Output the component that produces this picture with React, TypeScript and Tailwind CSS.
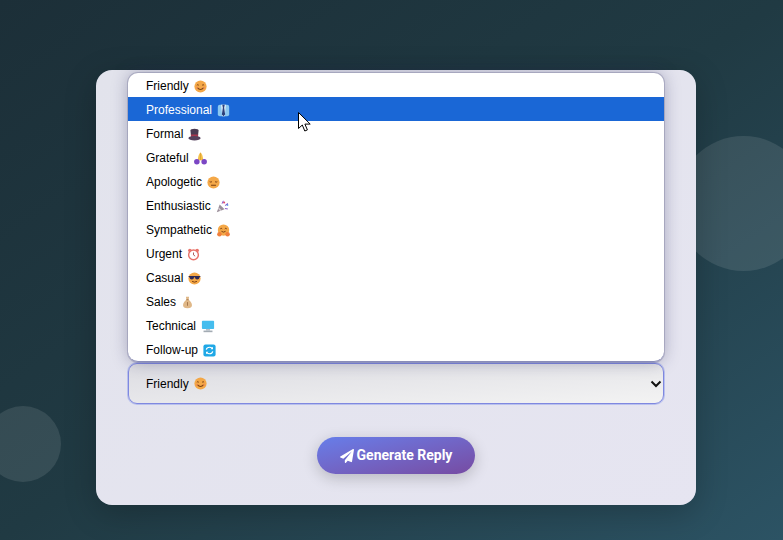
import { FaPaperPlane } from "react-icons/fa";

// emoji are drawn by hand, the sandbox has no colour emoji font
function Smile() {
  return (
    <svg width="13" height="13" viewBox="0 0 16 16">
      <circle cx="8" cy="8" r="7.500" fill="#f4a848" />
      <path d="M3.500 6.500q1.200-1.600 2.400 0M10 6.500q1.200-1.600 2.400 0" stroke="#7a3f12" strokeWidth="1.200" fill="none" />
      <path d="M4 9.500q4 4.500 8 0" stroke="#7a3f12" strokeWidth="1.300" fill="none" />
      <circle cx="3.600" cy="9.600" r="1.400" fill="#f08a5a" opacity=".7" />
      <circle cx="12.400" cy="9.600" r="1.400" fill="#f08a5a" opacity=".7" />
    </svg>
  );
}

function Suit() {
  return (
    <svg width="13" height="13" viewBox="0 0 16 16">
      <rect x="1" y="1" width="14" height="14" rx="2.500" fill="#8cc8f0" />
      <path d="M5 1h6L9.500 15h-3z" fill="#e4f2fb" />
      <path d="M6.500 1h3L8.800 4.500 10 13l-2 2-2-2 1.200-8.500z" fill="#2b3f7a" />
    </svg>
  );
}

function Hat() {
  return (
    <svg width="13" height="13" viewBox="0 0 16 16">
      <path d="M3 3q0-2 5-2t5 2l-.8 8H3.800z" fill="#4a3a52" />
      <path d="M3.500 8h9l-.3 3H3.800z" fill="#a5364f" />
      <ellipse cx="8" cy="12.500" rx="7.500" ry="2.800" fill="#54405c" />
    </svg>
  );
}

function Pray() {
  return (
    <svg width="13" height="13" viewBox="0 0 16 16">
      <path d="M8 .5Q5.500 2 4.500 10h7Q10.500 2 8 .5z" fill="#f5c04a" />
      <path d="M8 1v9" stroke="#d99a2c" strokeWidth=".8" />
      <circle cx="3.500" cy="12" r="3.400" fill="#7b46c4" />
      <circle cx="12.500" cy="12" r="3.400" fill="#7b46c4" />
    </svg>
  );
}

function Pensive() {
  return (
    <svg width="13" height="13" viewBox="0 0 16 16">
      <circle cx="8" cy="8" r="7.500" fill="#f4a848" />
      <path d="M3.300 7q1.400 1 2.800 0M9.900 7q1.400 1 2.800 0" stroke="#7a3f12" strokeWidth="1.200" fill="none" />
      <path d="M5 11.500h6" stroke="#7a3f12" strokeWidth="1.300" />
    </svg>
  );
}

function Party() {
  return (
    <svg width="13" height="13" viewBox="0 0 16 16">
      <path d="M1 15l3.500-9.500 6 6z" fill="#9b8f9a" />
      <path d="M3.200 9l3.800 3.800-1.800.7-2.600-2.600z" fill="#d9d2d8" />
      <circle cx="10" cy="3" r="1.300" fill="#e0476a" />
      <circle cx="14" cy="6" r="1.200" fill="#4a8be0" />
      <path d="M7.500 4.500l1.500-3.500M11 7l3.500-3M11 10.500l3.500.5" stroke="#7b46c4" strokeWidth="1.100" />
    </svg>
  );
}

function Hug() {
  return (
    <svg width="13" height="13" viewBox="0 0 16 16">
      <circle cx="8" cy="7.500" r="7" fill="#f4a848" />
      <path d="M4 6q1.200-1.500 2.400 0M9.600 6q1.200-1.500 2.400 0" stroke="#7a3f12" strokeWidth="1.200" fill="none" />
      <path d="M5.500 9q2.500 2 5 0" stroke="#7a3f12" strokeWidth="1.200" fill="none" />
      <circle cx="3" cy="12.500" r="2.800" fill="#f07f3c" />
      <circle cx="13" cy="12.500" r="2.800" fill="#f07f3c" />
    </svg>
  );
}

function Clock() {
  return (
    <svg width="13" height="13" viewBox="0 0 16 16">
      <circle cx="3.500" cy="3" r="2.200" fill="#e8736a" />
      <circle cx="12.500" cy="3" r="2.200" fill="#e8736a" />
      <circle cx="8" cy="8.500" r="6" fill="#fff" stroke="#e8736a" strokeWidth="1.800" />
      <path d="M8 5.500v3l2 1.500" stroke="#a34a4a" strokeWidth="1.100" fill="none" />
    </svg>
  );
}

function Sunglasses() {
  return (
    <svg width="13" height="13" viewBox="0 0 16 16">
      <circle cx="8" cy="8" r="7.500" fill="#f4a848" />
      <path d="M.8 5h14.400v1.200l-1 .3q-.4 2.800-2.900 2.800T8.500 6.500h-1Q7.200 9.300 4.700 9.300T1.800 6.500l-1-.3z" fill="#2f2a55" />
      <path d="M5 11.500q3 2 6 0" stroke="#7a3f12" strokeWidth="1.200" fill="none" />
    </svg>
  );
}

function MoneyBag() {
  return (
    <svg width="13" height="13" viewBox="0 0 16 16">
      <path d="M6 1h4L9.300 4.500q4.200 3 4.200 7 0 3.500-5.500 3.500t-5.500-3.500q0-4 4.200-7z" fill="#e0b888" />
      <path d="M6.500 4.500h3" stroke="#a5764a" strokeWidth="1" />
      <path d="M8 7.500v4.500" stroke="#a5764a" strokeWidth="1.200" />
    </svg>
  );
}

function Computer() {
  return (
    <svg width="14" height="13" viewBox="0 0 16 16">
      <rect x=".5" y="1" width="15" height="10" rx="1" fill="#45bdee" />
      <rect x="5.500" y="11" width="5" height="2" fill="#b9c0c8" />
      <rect x="2.500" y="13" width="11" height="2" fill="#a3abb3" />
    </svg>
  );
}

function Cycle() {
  return (
    <svg width="13" height="13" viewBox="0 0 16 16">
      <rect x=".5" y=".5" width="15" height="15" rx="2.500" fill="#1fa8e6" />
      <path d="M4 7q.8-3 4-3 2 0 3.200 1.500M12 9q-.8 3-4 3-2 0-3.200-1.500" stroke="#fff" strokeWidth="1.500" fill="none" />
      <path d="M12.300 3.500v3h-3zM3.700 12.500v-3h3z" fill="#fff" />
    </svg>
  );
}

const tones = [
  { label: "Friendly", icon: <Smile /> },
  { label: "Professional", icon: <Suit /> },
  { label: "Formal", icon: <Hat /> },
  { label: "Grateful", icon: <Pray /> },
  { label: "Apologetic", icon: <Pensive /> },
  { label: "Enthusiastic", icon: <Party /> },
  { label: "Sympathetic", icon: <Hug /> },
  { label: "Urgent", icon: <Clock /> },
  { label: "Casual", icon: <Sunglasses /> },
  { label: "Sales", icon: <MoneyBag /> },
  { label: "Technical", icon: <Computer /> },
  { label: "Follow-up", icon: <Cycle /> },
];

export default function App() {
  return (
    <div className="relative w-[783px] h-[540px] overflow-hidden pt-[70px] bg-gradient-to-br from-[#1c2f38] via-[#203a43] to-[#2c5364] font-['Liberation_Sans',sans-serif]">
      <div className="absolute left-[-15px] top-[406px] w-[76px] h-[76px] rounded-full bg-white/10" />
      <div className="absolute left-[676px] top-[136px] w-[135px] h-[135px] rounded-full bg-white/10" />

      <div className="relative ml-[96px] w-[600px] h-[435px] rounded-2xl bg-gradient-to-br from-[#e2e3ec] to-[#e6e5f1] shadow-[0_8px_32px_rgba(0,0,0,0.22)] px-[32px] pt-[293px]">
        <div className="relative">
          {/* open list of the select */}
          <div className="absolute left-0 right-0 bottom-full mb-[1px] bg-white rounded-[10px] overflow-hidden border-b border-[#8a8db8] shadow-[0_0_0_1px_rgba(100,100,140,0.3),0_0_16px_rgba(40,40,90,0.35)]">
            {tones.map((t, i) => (
              <div
                key={t.label}
                className={`flex items-center gap-[5px] h-6 pt-[2px] pl-[18px] text-[12px] ${i === 1 ? "bg-[#1a67d6] text-white" : "text-black"}`}
              >
                <span>{t.label}</span>
                {t.icon}
              </div>
            ))}
          </div>

          <div className="flex items-center justify-between h-[41px] rounded-[9px] border border-[#7f88e0] shadow-[0_0_0_1px_rgba(102,126,234,0.35)] bg-gradient-to-br from-[#dcdce2] to-[#f3f3f3] pl-[17px] pr-[1px] text-[12px] text-black">
            <span className="flex items-center gap-[5px]">
              Friendly
              <Smile />
            </span>
            <svg width="12" height="8" viewBox="0 0 12 8">
              <path d="M1.500 1.500L6 6l4.500-4.500" stroke="#111" strokeWidth="2" fill="none" />
            </svg>
          </div>
        </div>

        <div className="flex justify-center mt-[33px]">
          <button className="flex items-center justify-center gap-[3px] w-[158px] h-[37px] rounded-full bg-gradient-to-br from-[#667eea] to-[#764ba2] text-white text-[14px] font-bold font-['Roboto',sans-serif] shadow-[0_4px_15px_rgba(0,0,0,0.2)]">
            <FaPaperPlane className="text-[14px]" />
            Generate Reply
          </button>
        </div>
      </div>

      {/* mouse pointer */}
      <svg className="absolute left-[298px] top-[112px]" width="13" height="20" viewBox="0 0 13 20">
        <path d="M.5.500v16l3.800-3.500 2.500 6 2.600-1.100-2.500-5.800h5.300z" fill="#fff" stroke="#000" strokeWidth="1" />
      </svg>
    </div>
  );
}
